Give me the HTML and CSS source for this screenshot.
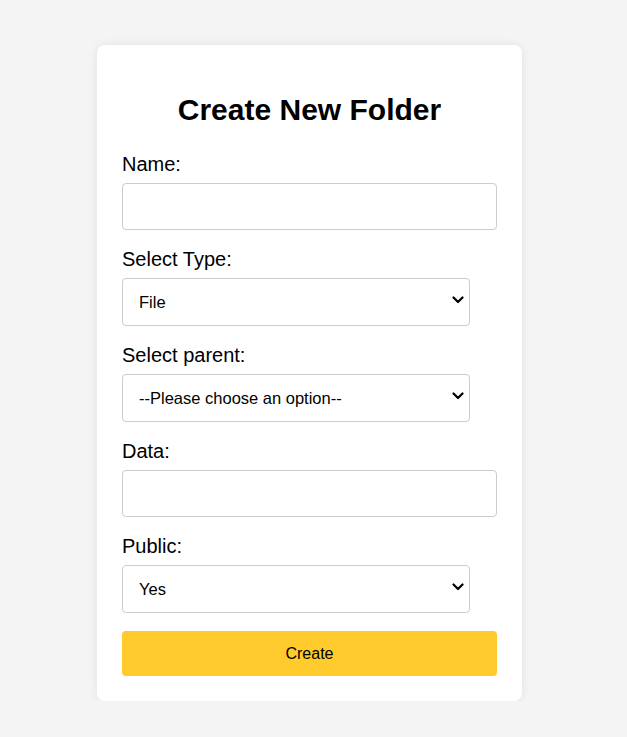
FILE: index.html
```html
<!DOCTYPE html>
<html>
<head>
<meta charset="utf-8">
<link rel="stylesheet" href="styles.css">
</head>
<body>
<div class="page">
  <form class="card">
    <h2 class="title">Create New Folder</h2>
    <label class="label" for="name">Name:</label>
    <input class="field input" id="name" type="text">
    <label class="label" for="type">Select Type:</label>
    <div class="select-wrap">
      <select class="field select" id="type">
        <option>File</option>
        <option>Folder</option>
      </select>
      <svg class="chev" width="12" height="8" viewBox="0 0 12 8"><path d="M1.5 1.5 L6 6 L10.5 1.5" fill="none" stroke="#000" stroke-width="2.2" stroke-linecap="round" stroke-linejoin="round"/></svg>
    </div>
    <label class="label" for="parent">Select parent:</label>
    <div class="select-wrap">
      <select class="field select" id="parent">
        <option>--Please choose an option--</option>
      </select>
      <svg class="chev" width="12" height="8" viewBox="0 0 12 8"><path d="M1.5 1.5 L6 6 L10.5 1.5" fill="none" stroke="#000" stroke-width="2.2" stroke-linecap="round" stroke-linejoin="round"/></svg>
    </div>
    <label class="label" for="data">Data:</label>
    <input class="field input" id="data" type="text">
    <label class="label" for="public">Public:</label>
    <div class="select-wrap">
      <select class="field select" id="public">
        <option>Yes</option>
        <option>No</option>
      </select>
      <svg class="chev" width="12" height="8" viewBox="0 0 12 8"><path d="M1.5 1.5 L6 6 L10.5 1.5" fill="none" stroke="#000" stroke-width="2.2" stroke-linecap="round" stroke-linejoin="round"/></svg>
    </div>
    <button class="btn" type="button">Create</button>
  </form>
</div>
</body>
</html>
```
FILE: styles.css
```css
html, body {
  margin: 0;
  padding: 0;
  background: #f4f4f4;
  font-family: "Liberation Sans", Arial, sans-serif;
}
.page {
  display: flex;
  justify-content: center;
  padding: 45px 8px 0 0;
}
.card {
  width: 425px;
  box-sizing: border-box;
  background: #fff;
  border-radius: 8px;
  box-shadow: 0 0 10px rgba(0,0,0,0.08);
  padding: 25px;
  display: flex;
  flex-direction: column;
  align-items: flex-start;
}
.title {
  align-self: stretch;
  text-align: center;
  font-size: 30px;
  font-weight: bold;
  margin: 22px 0 26px;
  line-height: 35px;
  color: #000;
}
.label {
  display: block;
  font-size: 20px;
  line-height: 23px;
  margin-bottom: 7px;
  color: #000;
}
.field {
  box-sizing: border-box;
  width: 375px;
  height: 48px;
  margin: 0 0 18px;
  border: 1px solid #ccc;
  border-radius: 4px;
  padding: 0 16px;
  font-family: "Liberation Sans", Arial, sans-serif;
  font-size: 16.5px;
  color: #000;
  background: #fff;
  outline: none;
}
.input {
  height: 47px;
}
.select-wrap {
  position: relative;
}
.select {
  width: 348px;
  appearance: none;
  -webkit-appearance: none;
  display: block;
}
.chev {
  position: absolute;
  right: 6px;
  top: 18px;
  pointer-events: none;
}
.btn {
  align-self: stretch;
  height: 45px;
  margin: 0;
  border: none;
  border-radius: 4px;
  background: #ffca2c;
  color: #000;
  font-family: "Liberation Sans", Arial, sans-serif;
  font-size: 16px;
}
```
